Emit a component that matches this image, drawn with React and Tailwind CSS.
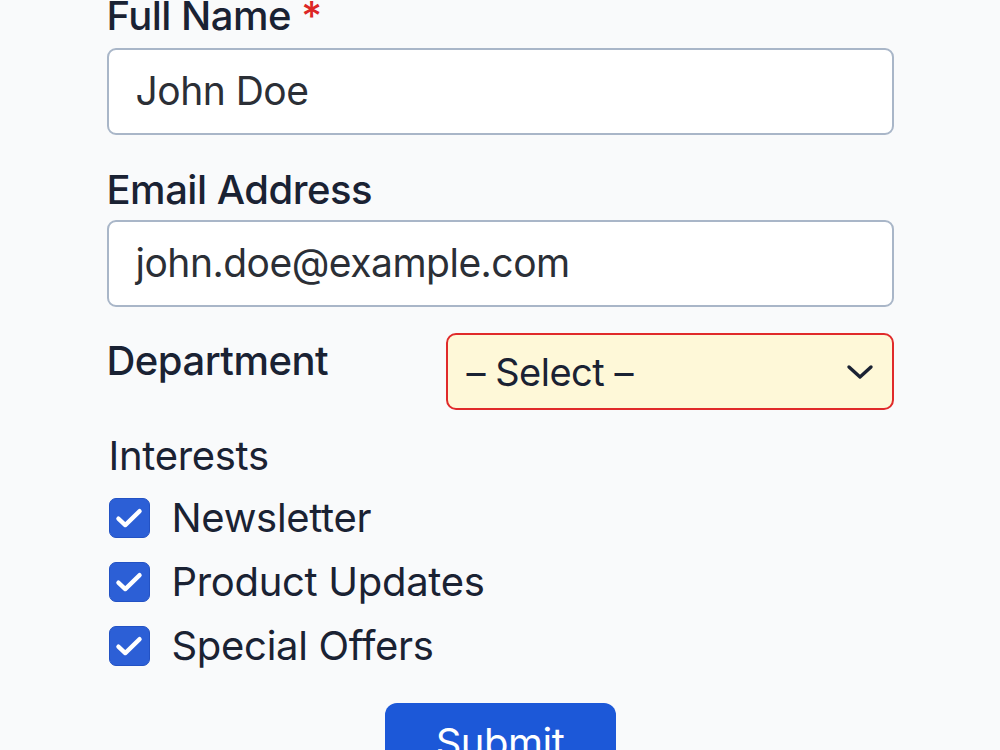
import React from 'react';

const interests = ['Newsletter', 'Product Updates', 'Special Offers'];

function CheckBox() {
  return (
    <span className="flex h-10 w-[41px] shrink-0 items-center justify-center rounded-[7px] bg-[#2c5fd6] border border-[#2352c4]">
      <svg width="30" height="30" viewBox="0 0 24 24" fill="none" stroke="white" strokeWidth="3.4" strokeLinecap="round" strokeLinejoin="round">
        <path d="M3.5 12.5l5.5 5.2L20.5 6.5" />
      </svg>
    </span>
  );
}

export default function App() {
  return (
    <div className="min-h-[750px] bg-[#f9fafb] font-['Inter',sans-serif] text-[#1a2233] overflow-hidden">
      <form className="mx-auto w-[787px]">

        {/* Full name */}
        <label className="-mt-1 block text-[40px] leading-none font-medium tracking-[-0.5px]">
          Full Name <span className="text-[#dc2626]">*</span>
        </label>
        <div className="mt-3 flex h-[87px] items-center rounded-[9px] border-2 border-[#a9b6c8] bg-white px-[27px] text-[39px] tracking-[-0.5px] text-[#2b2f36]">
          John Doe
        </div>

        {/* Email */}
        <label className="mt-[35px] block text-[40px] leading-none font-medium tracking-[-0.5px]">
          Email Address
        </label>
        <div className="mt-[10px] flex h-[87px] items-center rounded-[9px] border-2 border-[#a9b6c8] bg-white px-[27px] text-[39px] tracking-[-0.5px] text-[#2b2f36]">
          john.doe@example.com
        </div>

        {/* Department */}
        <div className="mt-[26px] flex">
          <label className="mt-2 w-[339px] text-[40px] leading-none font-medium tracking-[-0.5px]">
            Department
          </label>
          <div className="flex h-[77px] flex-1 items-center justify-between rounded-[10px] border-2 border-[#e02a2a] bg-[#fef8d8] pl-[19px] pr-[18px] text-[38px] leading-none tracking-[-0.5px]">
            <span>– Select –</span>
            <svg width="28" height="18" viewBox="0 0 28 18" fill="none" stroke="#1a2233" strokeWidth="3.4" strokeLinecap="round" strokeLinejoin="round">
              <path d="M3 4l11 10L25 4" />
            </svg>
          </div>
        </div>

        {/* Interests */}
        <div className="mt-[26px] ml-[2px] text-[40px] leading-none tracking-[-0.3px]">Interests</div>
        <div className="mt-[22px] ml-[2px] flex flex-col gap-6">
          {interests.map((item) => (
            <div key={item} className="flex items-center gap-[22px] text-[40px] leading-none tracking-[-0.3px]">
              <CheckBox />
              <span>{item}</span>
            </div>
          ))}
        </div>

        <div className="mt-[37px] flex justify-center">
          <button type="button" className="w-[231px] rounded-[12px] bg-[#1c58d8] pt-5 pb-6 text-[40px] leading-none tracking-[-0.5px] text-white">
            Submit
          </button>
        </div>
      </form>
    </div>
  );
}
